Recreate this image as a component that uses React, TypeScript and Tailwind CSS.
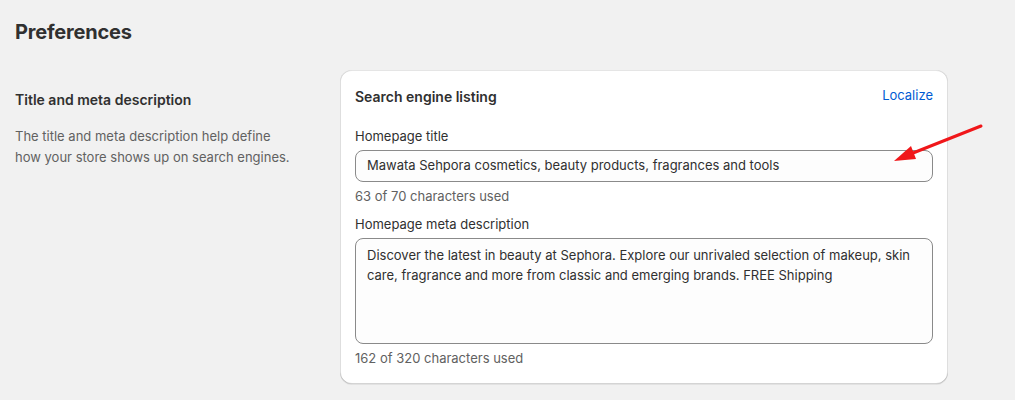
import React from "react";

export default function App() {
  return (
    <div
      className="w-[1015px] h-[400px] bg-[#f1f1f1] overflow-hidden relative"
      style={{ fontFamily: "Inter, 'Noto Sans', sans-serif" }}
    >
      <div className="pl-[15px] pt-[20px]">
        <h1 className="text-[20px] leading-[24px] font-bold text-[#303030] tracking-[-0.2px]">Preferences</h1>
        <div className="flex mt-[26px]">
          <div className="w-[325px] pt-[20px] pr-[40px]">
            <h2 className="text-[14px] leading-[20px] font-semibold text-[#303030]">Title and meta description</h2>
            <p className="mt-[16px] text-[13px] leading-[21px] text-[#616161]">
              The title and meta description help define how your store shows up on search engines.
            </p>
          </div>
          <div className="w-[608px] bg-white rounded-[12px] shadow-[0_1px_0_0_rgba(26,26,26,0.07),0_1px_0_0_rgba(204,204,204,0.5)_inset,0_-1px_0_0_rgba(0,0,0,0.17)_inset,-1px_0_0_0_rgba(0,0,0,0.13)_inset,1px_0_0_0_rgba(0,0,0,0.13)_inset] px-[15px] pt-[16px] pb-[16px]">
            <div className="flex items-center justify-between h-[20px]">
              <span className="text-[14px] font-semibold text-[#303030]">Search engine listing</span>
              <span className="text-[13px] text-[#005bd3]">Localize</span>
            </div>
            <div className="mt-[20px] text-[13px] leading-[20px] text-[#303030]">Homepage title</div>
            <div className="mt-[4px] h-[32px] rounded-[8px] border border-[#8a8a8a] bg-[#fdfdfd] flex items-center px-[11px] text-[13px] text-[#303030]">
              Mawata Sehpora cosmetics, beauty products, fragrances and tools
            </div>
            <div className="mt-[4px] text-[13px] leading-[20px] text-[#616161]">63 of 70 characters used</div>
            <div className="mt-[8px] text-[13px] leading-[20px] text-[#303030]">Homepage meta description</div>
            <div className="mt-[4px] h-[106px] rounded-[8px] border border-[#8a8a8a] bg-[#fdfdfd] px-[11px] pt-[6px] text-[13px] leading-[20px] text-[#303030]">
              Discover the latest in beauty at Sephora. Explore our unrivaled selection of makeup, skin care, fragrance and more from classic and emerging brands. FREE Shipping
            </div>
            <div className="mt-[4px] text-[13px] leading-[20px] text-[#616161]">162 of 320 characters used</div>
          </div>
        </div>
      </div>
      <svg className="absolute left-0 top-0 pointer-events-none" width="1015" height="400">
        <line x1="981" y1="126" x2="908" y2="155" stroke="#f0171a" strokeWidth="3" strokeLinecap="round" />
        <polygon points="894,161 911,146 916,159" fill="#f0171a" />
      </svg>
    </div>
  );
}
